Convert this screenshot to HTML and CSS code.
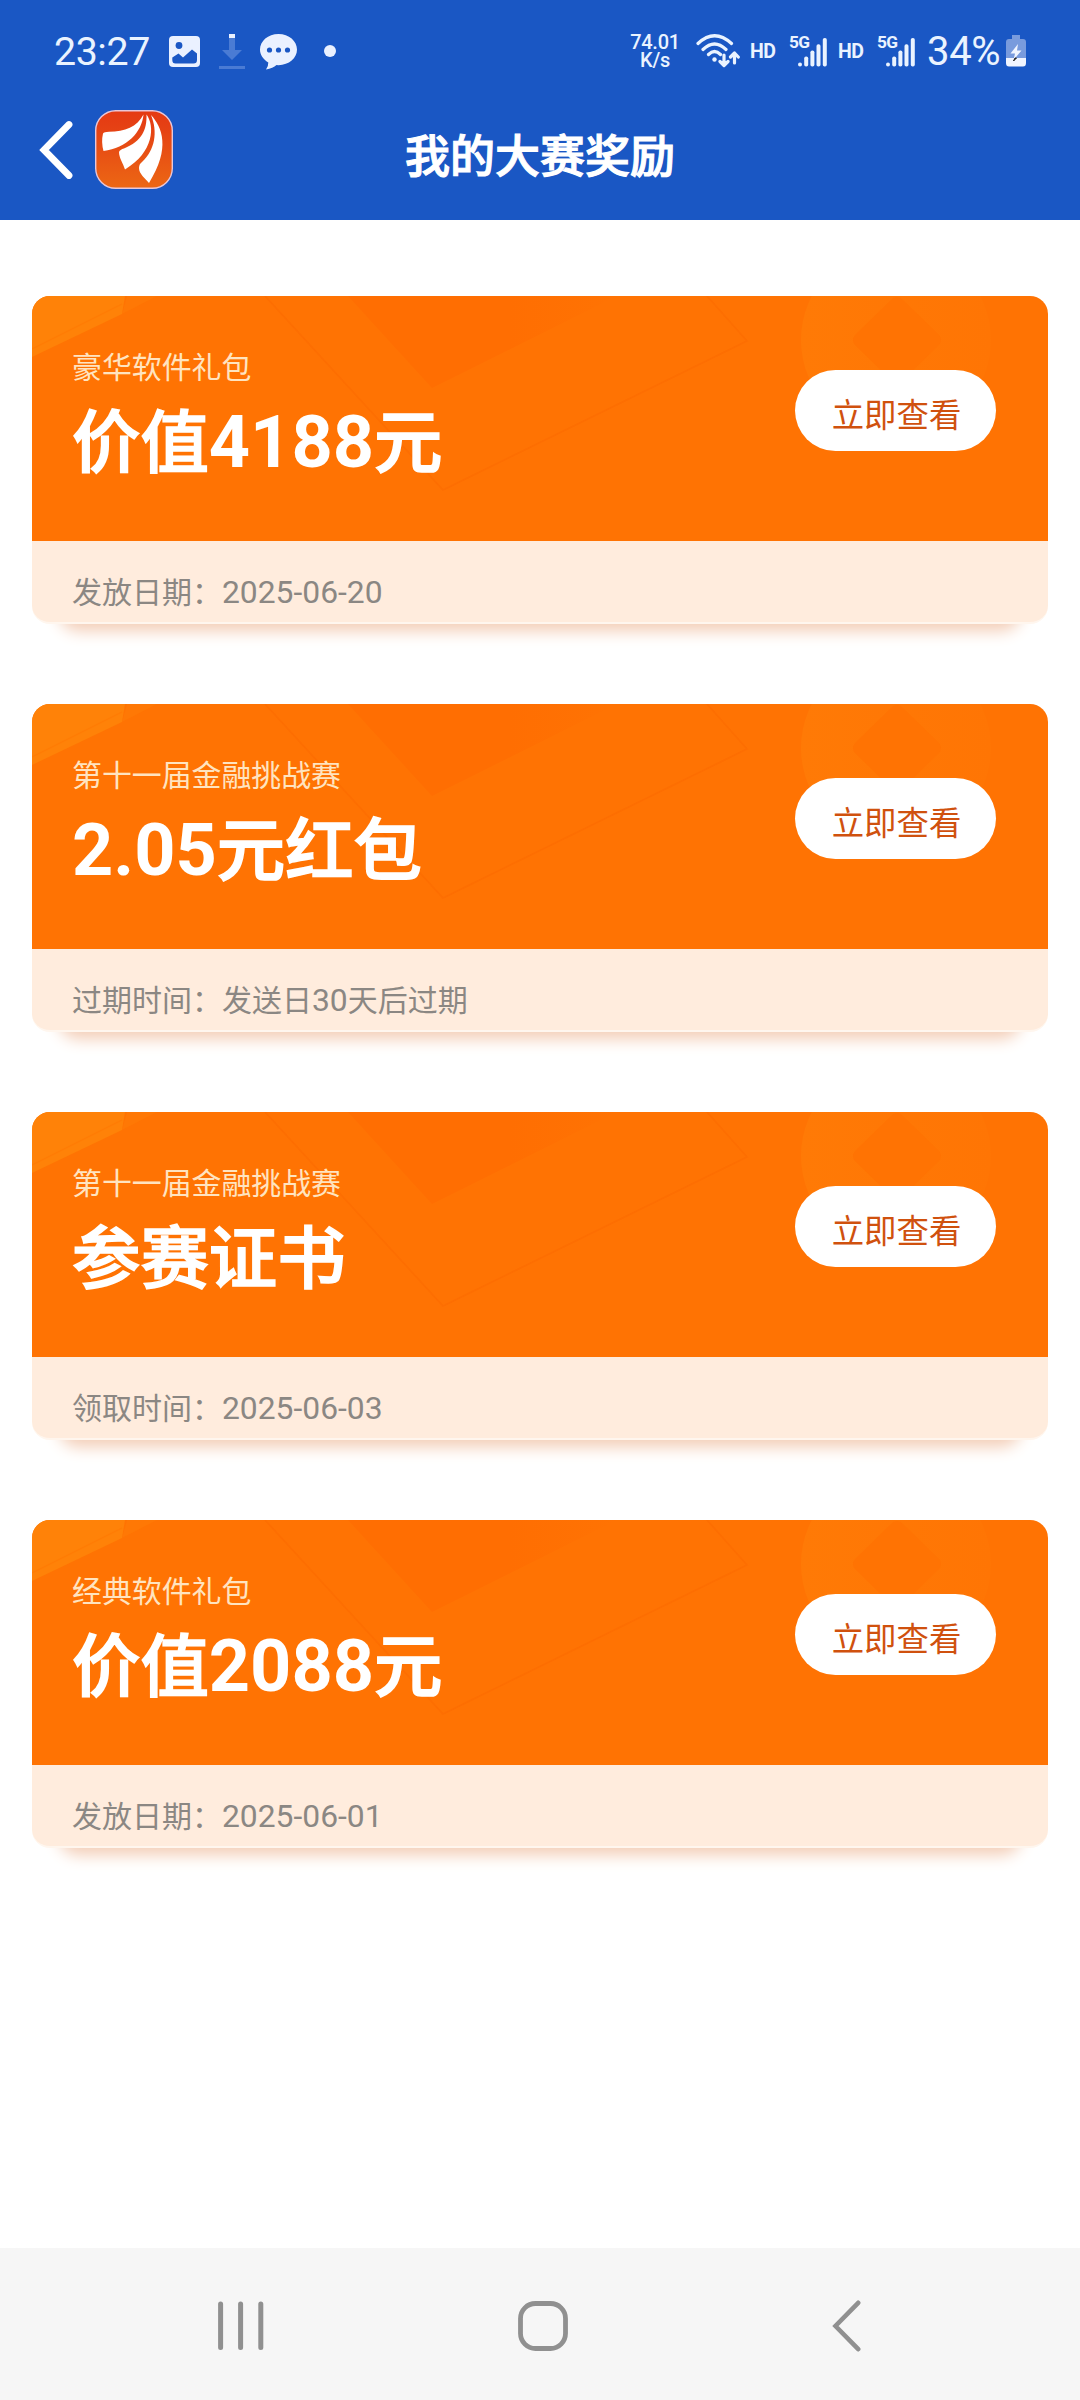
FILE: index.html
```html
<!DOCTYPE html>
<html lang="zh-CN">
<head>
<meta charset="utf-8">
<title>我的大赛奖励</title>
<link rel="stylesheet" href="styles.css">
</head>
<body>
<svg class="defs" width="0" height="0" aria-hidden="true">
  <defs>
    <linearGradient id="coin" x1="0" x2="1"><stop offset="0" stop-color="#ff7a06"/><stop offset="1" stop-color="#ff7504"/></linearGradient>
    <linearGradient id="wedge" x1="0" x2="1"><stop offset="0" stop-color="#ff6e02"/><stop offset=".6" stop-color="#ff6e02"/><stop offset="1" stop-color="#ff7303"/></linearGradient>
    <symbol id="art" viewBox="0 0 1016 245">
      <path d="M95 0H125L90 18Z" fill="#ff7805"/>
      <path d="M0 0H93L90 18L0 61Z" fill="#ff8208"/>
      <path d="M0 53L90 8" stroke="#ff7c05" stroke-width="1.2" fill="none"/>
      <path d="M316 0L400 92L585 0Z" fill="url(#wedge)"/>
      <path d="M233 0L411 194L715 45L675 0" stroke="#fd6e02" stroke-width="1.6" fill="none"/>
      <circle cx="864" cy="44" r="95" fill="url(#coin)"/>
      <path d="M859 4Q865 -2 871 4L907 39Q911 44 907 49L871 84H859L823 49Q819 44 823 39Z" fill="#ff7303"/>
    </symbol>
    <symbol id="signal" viewBox="0 0 29 29">
      <g fill="#eaf3ff"><rect y="24.5" width="4" height="4" rx="2"/><rect x="6.2" y="18.5" width="4" height="10" rx="1.8"/><rect x="12.4" y="12.5" width="4" height="16" rx="1.8"/><rect x="18.5" y="6.2" width="4" height="22.3" rx="1.8"/><rect x="24.8" y="0" width="4" height="28.5" rx="1.8"/></g>
    </symbol>
  </defs>
</svg>

<header class="top">
  <div class="status">
    <span class="clock">23:27</span>
    <svg class="ic-photo" width="31" height="31" viewBox="0 0 31 31"><rect width="31" height="31" rx="4" fill="#eaf1ff"/><circle cx="10" cy="9.5" r="3.4" fill="#1a57c4"/><path d="M3.3 21.5L9.5 17.5L14 21.5L23 13.5L28 17.5V24Q28 27.5 24.5 27.5H6.5Q3.3 27.5 3.3 24Z" fill="#1a57c4"/></svg>
    <svg class="ic-down" width="26" height="36" viewBox="0 0 26 36"><path d="M10 4H16V17H23L13 27L3 17H10ZM0 33H26V36H0Z" fill="#4a7bd4"/><path d="M10 1H16V5H10Z" fill="#eaf1ff"/></svg>
    <svg class="ic-chat" width="37" height="36" viewBox="0 0 37 36"><path d="M18.5 0C29 0 37 7 37 15.6S29 31.2 18.5 31.2L16.5 31.1Q13 34.5 6 35.6Q8.5 32 8.3 28.5C3 25.5 0 20.8 0 15.6C0 7 8 0 18.5 0Z" fill="#eaf1ff"/><g fill="#1a57c4"><circle cx="9.5" cy="16" r="2.6"/><circle cx="18.5" cy="16" r="2.6"/><circle cx="27.5" cy="16" r="2.6"/></g></svg>
    <i class="dot"></i>
    <div class="speed"><span>74.01</span><span>K/s</span></div>
    <svg class="ic-wifi" width="44" height="34" viewBox="0 0 44 34"><g fill="none" stroke="#eaf3ff" stroke-width="3.2" stroke-linecap="round" stroke-linejoin="round"><path d="M2 9.5Q18.5 -6 35.500 9.500M7 15.500Q18.500 4.500 30 15.500M12.500 20.500Q18.500 14.500 24.500 20.500M28 21V31M24 27.500L28 31.500L32 27.500M38.500 29V20M34.500 23L38.500 19L42.300 23"/></g><circle cx="18.500" cy="25.500" r="2.200" fill="#eaf3ff"/></svg>
    <span class="hd hd1">HD</span>
    <span class="g5">5G</span>
    <svg class="ic-sig" width="29" height="29"><use href="#signal"/></svg>
    <span class="hd hd2">HD</span>
    <span class="g5">5G</span>
    <svg class="ic-sig" width="29" height="29"><use href="#signal"/></svg>
    <span class="pct">34%</span>
    <svg class="ic-bat" width="20" height="32" viewBox="0 0 20 32"><path d="M6 0H14V4H17Q20 4 20 7V23H0V7Q0 4 3 4H6Z" fill="#799bdd"/><path d="M0 23H20V28Q20 31.500 17 31.500H3Q0 31.500 0 28Z" fill="#f1f5ff"/><path d="M12 9L4.500 18.500H9L7.500 25L15.500 15.500H11Z" fill="#f1f5ff"/><path d="M9 23H10.500L7.500 26Z" fill="#222" stroke="#222"/></svg>
  </div>
  <div class="titlebar">
    <svg class="ic-back" width="34" height="60" viewBox="0 0 34 60"><path d="M30 4.500L5 30L30 55.500" fill="none" stroke="#fff" stroke-width="6.800" stroke-linecap="round" stroke-linejoin="miter"/></svg>
    <svg class="logo" width="78" height="79" viewBox="0 0 78 79"><defs><linearGradient id="lg" x2="0" y2="1"><stop offset="0" stop-color="#e53a12"/><stop offset=".2" stop-color="#e54014"/><stop offset="1" stop-color="#ec6714"/></linearGradient></defs><rect x=".7" y=".7" width="76.600" height="77.600" rx="20" fill="url(#lg)" stroke="#e9c6d6" stroke-width="1.400"/><g fill="#fff"><path d="M48.500 4.500C47 22 32 38 8.500 41Q6 32 8 23.500Q9 22 14 21.800C30 21.500 42 17 48.500 4.500Z"/><path d="M51.500 4.500C60 16 59 42 30 59.500C28 53 24 48 24 42Q25 39.500 29 38.500C47 31 52 20 51.500 4.500Z"/><path d="M56 5C67 17 76 38 54 73C50 68 44 64 44 58Q44 54 47 52C60 40 63 22 56 5Z"/></g></svg>
    <h1>我的大赛奖励</h1>
  </div>
</header>

<main class="list">
  <article class="card">
    <div class="face">
      <svg class="art" width="1016" height="245"><use href="#art"/></svg>
      <div class="info"><p class="sub">豪华软件礼包</p><h2>价值<b>4188</b>元</h2></div>
      <button class="view">立即查看</button>
    </div>
    <p class="foot">发放日期：<span>2025-06-20</span></p>
  </article>
  <article class="card">
    <div class="face">
      <svg class="art" width="1016" height="245"><use href="#art"/></svg>
      <div class="info"><p class="sub">第十一届金融挑战赛</p><h2><b>2.05</b>元红包</h2></div>
      <button class="view">立即查看</button>
    </div>
    <p class="foot">过期时间：发送日<span>30</span>天后过期</p>
  </article>
  <article class="card">
    <div class="face">
      <svg class="art" width="1016" height="245"><use href="#art"/></svg>
      <div class="info"><p class="sub">第十一届金融挑战赛</p><h2>参赛证书</h2></div>
      <button class="view">立即查看</button>
    </div>
    <p class="foot">领取时间：<span>2025-06-03</span></p>
  </article>
  <article class="card">
    <div class="face">
      <svg class="art" width="1016" height="245"><use href="#art"/></svg>
      <div class="info"><p class="sub">经典软件礼包</p><h2>价值<b>2088</b>元</h2></div>
      <button class="view">立即查看</button>
    </div>
    <p class="foot">发放日期：<span>2025-06-01</span></p>
  </article>
</main>

<nav class="navbar">
  <svg class="nav-recent" width="46" height="50" viewBox="0 0 46 50"><path d="M2.600 3V46.500M22.600 3V46.500M42.800 3V46.500" stroke="#909090" stroke-width="5" stroke-linecap="round"/></svg>
  <svg class="nav-home" width="50" height="50" viewBox="0 0 50 50"><rect x="2.500" y="2.500" width="45" height="45" rx="15" fill="none" stroke="#909090" stroke-width="4.800"/></svg>
  <svg class="nav-back" width="30" height="52" viewBox="0 0 30 52"><path d="M26.200 2.800L3.500 26L26.200 49.200" fill="none" stroke="#909090" stroke-width="4.600" stroke-linecap="round"/></svg>
</nav>
</body>
</html>
```
FILE: styles.css
```css
* { box-sizing: border-box; }
body {
  margin: 0;
  width: 1080px;
  height: 2400px;
  display: flex;
  flex-direction: column;
  overflow: hidden;
  background: #fff;
  font-family: Roboto, "Noto Sans CJK SC", sans-serif;
}
h1, h2, p { margin: 0; }
svg { display: block; flex: none; }
.defs { position: absolute; }

.top { height: 220px; flex: none; background: #1a57c4; color: #eaf3ff; }

.status { height: 102px; display: flex; align-items: center; padding-left: 54px; white-space: nowrap; }
.status > * { flex: none; }
.clock { width: 115px; margin-top: 1px; font-size: 39.3px; letter-spacing: -.4px; line-height: 46px; }
.ic-photo { margin-top: 1px; }
.ic-down { margin-left: 19px; }
.ic-chat { margin-left: 15px; margin-top: 1px; }
.dot { width: 12px; height: 12px; margin-left: 27px; border-radius: 50%; background: #eaf1ff; }
.speed { width: 50px; margin-left: 294px; display: flex; flex-direction: column; align-items: center; font-size: 20px; font-weight: 500; line-height: 18px; letter-spacing: -.3px; }
.ic-wifi { margin-left: 16px; }
.hd { width: 28px; margin-top: 1px; font-size: 19.5px; font-weight: 700; letter-spacing: -.5px; line-height: 24px; }
.hd1 { margin-left: 10px; }
.hd2 { margin-left: 11px; }
.g5 { width: 21px; margin-left: 11px; margin-top: -19px; font-size: 17.3px; font-weight: 700; letter-spacing: -.6px; line-height: 20px; }
.ic-sig { margin-left: -12px; margin-top: 3px; }
.pct { width: 72px; margin-left: 12px; margin-top: 1px; font-size: 40px; letter-spacing: -.3px; line-height: 46px; }
.ic-bat { margin-left: 7px; }

.titlebar { height: 118px; display: flex; align-items: flex-start; padding-left: 39px; }
.ic-back { margin-top: 18px; }
.logo { margin-left: 22px; margin-top: 8px; }
h1 { margin: 23px 0 0 232px; font-size: 45px; font-weight: 500; line-height: 66px; color: #fff; -webkit-text-stroke: 1.1px #fff; }

.list { flex: 1; display: flex; flex-direction: column; gap: 80px; padding: 76px 32px 0; }
.card { position: relative; height: 328px; flex: none; border-radius: 18px; }
.card::before {
  content: "";
  position: absolute;
  left: 32px;
  right: 32px;
  bottom: 3px;
  height: 30px;
  border-radius: 16px;
  box-shadow: 0 4px 16px 6px #f3cdb6;
}
.face {
  position: relative;
  height: 245px;
  display: flex;
  justify-content: space-between;
  align-items: flex-start;
  padding: 0 52px 0 40px;
  background: #ff7303;
  border-radius: 18px 18px 0 0;
  overflow: hidden;
}
.art { position: absolute; left: 0; top: 0; }
.info { position: relative; color: #fff; }
.sub { margin-top: 50px; font-size: 29.9px; line-height: 44px; color: #ffe4c0; font-weight: 400; }
h2 { margin-top: 4px; font-size: 68.4px; line-height: 100px; font-weight: 500; white-space: nowrap; -webkit-text-stroke: 1.6px #fff; }
h2 b { font-size: 72px; font-weight: 700; line-height: 1; -webkit-text-stroke: 0; }
.view {
  position: relative;
  width: 201px;
  height: 81px;
  margin-top: 74px;
  padding: 11px 0 0 2px;
  border: 0;
  border-radius: 41px;
  background: #fff;
  color: #d0510e;
  font: 400 32.4px/70px Roboto, "Noto Sans CJK SC", sans-serif;
}
.foot {
  position: relative;
  height: 83px;
  padding: 30px 0 0 40px;
  font-size: 30px;
  line-height: 44px;
  color: #8b8783;
  background: #ffecdd;
  border-radius: 0 0 18px 18px;
  border-bottom: 2px solid #fff6ee;
}
.foot span { font-size: 31.8px; line-height: 1; }

.navbar { height: 152px; flex: none; display: flex; align-items: flex-start; padding-left: 218px; background: #f6f6f6; }
.nav-recent { margin-top: 53px; }
.nav-home { margin: 53px 0 0 254px; }
.nav-back { margin: 52px 0 0 264px; }
```
